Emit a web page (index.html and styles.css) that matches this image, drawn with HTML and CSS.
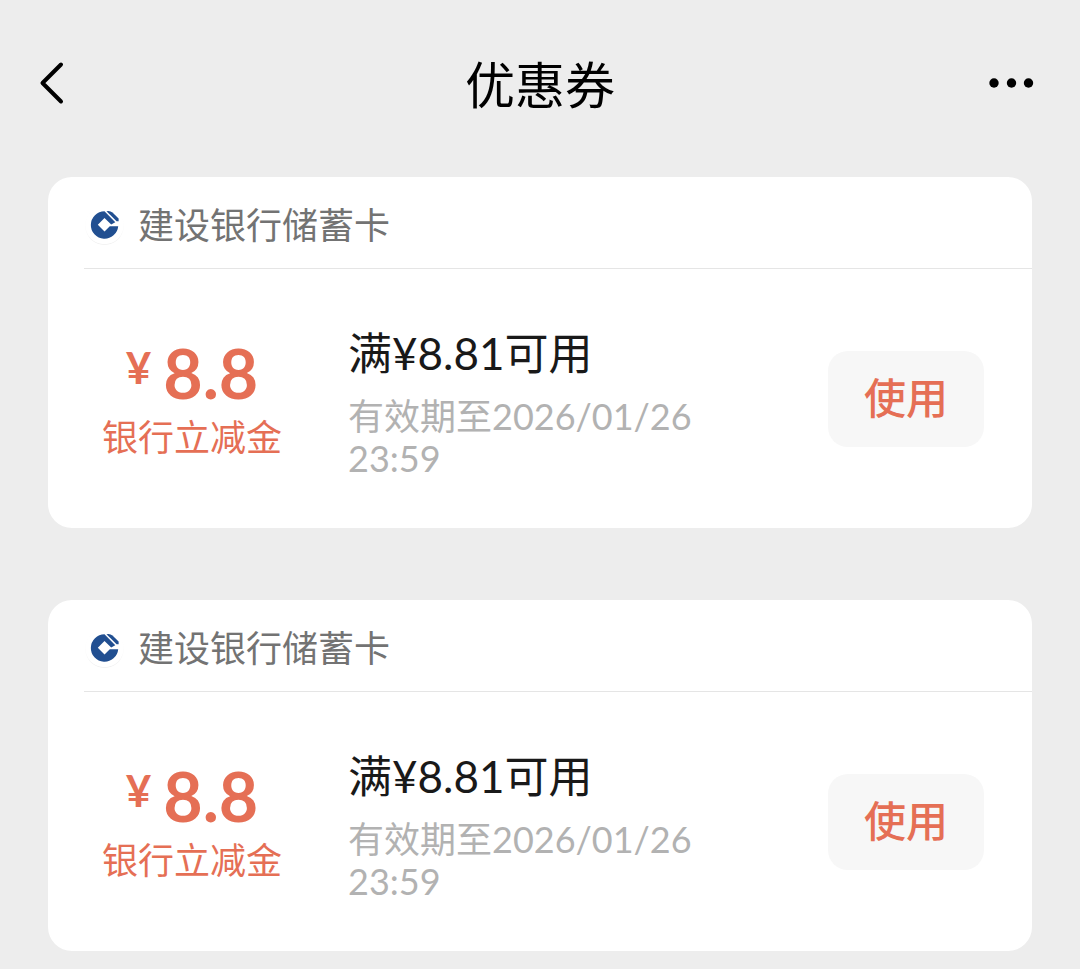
FILE: index.html
```html
<!DOCTYPE html>
<html lang="zh-CN">
<head>
<meta charset="utf-8">
<meta name="viewport" content="width=device-width, initial-scale=1">
<title>优惠券</title>
<link rel="stylesheet" href="styles.css">
</head>
<body>
<svg class="symbols" aria-hidden="true">
  <symbol id="bank-logo" viewBox="0 0 40 40">
    <circle cx="20.500" cy="21" r="19" fill="#f0f0f0"/>
    <circle cx="20.500" cy="20" r="19.300" fill="#fff"/>
    <path d="M20.500 6.300A13.700 13.700 0 1 0 34.200 21.200H25.800L20.500 26.500L13.800 19.800L20.500 13.100L27.200 19.400L31.300 17.200L20.500 6.300Z" fill="#214f91"/>
    <path d="M22.500 6.200Q26 5.400 28.500 7.500L34.600 13.500V16.200L32.600 16.200Z" fill="#214f91"/>
  </symbol>
</svg>
<header class="topbar">
  <button class="icon-button back" type="button" aria-label="返回">
    <svg width="26" height="44" viewBox="0 0 26 44"><path d="M22 3.500L3.500 22L22 40.500" fill="none" stroke="#000" stroke-width="4" stroke-linecap="round" stroke-linejoin="round"/></svg>
  </button>
  <h1 class="title">优惠券</h1>
  <button class="icon-button more" type="button" aria-label="更多">
    <svg width="46" height="12" viewBox="0 0 46 12"><circle cx="6" cy="6" r="4.700"/><circle cx="23.500" cy="6" r="4.700"/><circle cx="40.500" cy="6" r="4.700"/></svg>
  </button>
</header>
<main class="coupons">
  <article class="coupon">
    <header class="bank">
      <svg class="bank-logo"><use href="#bank-logo"/></svg>
      <span>建设银行储蓄卡</span>
    </header>
    <div class="body">
      <div class="value">
        <p class="amount"><span class="currency">¥</span><span>8.8</span></p>
        <p class="kind">银行立减金</p>
      </div>
      <div class="info">
        <h2 class="condition">满¥8.81可用</h2>
        <p class="expiry">有效期至2026/01/26 23:59</p>
      </div>
      <button class="use" type="button">使用</button>
    </div>
  </article>
  <article class="coupon">
    <header class="bank">
      <svg class="bank-logo"><use href="#bank-logo"/></svg>
      <span>建设银行储蓄卡</span>
    </header>
    <div class="body">
      <div class="value">
        <p class="amount"><span class="currency">¥</span><span>8.8</span></p>
        <p class="kind">银行立减金</p>
      </div>
      <div class="info">
        <h2 class="condition">满¥8.81可用</h2>
        <p class="expiry">有效期至2026/01/26 23:59</p>
      </div>
      <button class="use" type="button">使用</button>
    </div>
  </article>
</main>
</body>
</html>
```
FILE: styles.css
```css
* {
  box-sizing: border-box;
}

body {
  margin: 0;
  background: #ededed;
  color: #191919;
  font-family: Lato, "Noto Sans CJK SC", sans-serif;
}

h1, h2, p {
  margin: 0;
  font-weight: 400;
}

button {
  border: 0;
  font: inherit;
  cursor: pointer;
}

.symbols {
  display: none;
}

.topbar {
  display: grid;
  grid-template-columns: 1fr auto 1fr;
  align-items: center;
  height: 165px;
  padding: 0 36px;
}

.icon-button {
  display: flex;
  padding: 0;
  background: none;
}

.back {
  padding-left: 3px;
}

.more {
  justify-self: end;
  padding-right: 10px;
}

.title {
  padding-top: 4px;
  color: #000;
  font-size: 50px;
  line-height: 72px;
}

.coupons {
  display: flex;
  flex-direction: column;
  gap: 72px;
  padding: 12px 48px 18px;
}

.coupon {
  padding-left: 36px;
  border-radius: 24px;
  background: #fff;
}

.bank {
  display: flex;
  align-items: center;
  gap: 14px;
  height: 92px;
  padding-top: 4px;
  border-bottom: 1px solid #e5e5e5;
  color: #737373;
  font-size: 36px;
  line-height: 48px;
}

.bank-logo {
  width: 40px;
  height: 40px;
}

.body {
  display: flex;
  align-items: center;
  min-height: 259px;
  padding-right: 48px;
}

.value {
  width: 216px;
  padding-top: 2px;
  color: #e56f55;
  text-align: center;
}

.amount {
  display: flex;
  justify-content: center;
  gap: 12px;
  font-size: 68px;
  font-weight: 700;
  line-height: 70px;
}

.currency {
  font-size: 44px;
  line-height: 58px;
}

.kind {
  padding-top: 5px;
  font-size: 36px;
  line-height: 48px;
}

.info {
  flex: 1;
  margin-left: 48px;
  padding-top: 4px;
}

.condition {
  font-size: 44px;
  line-height: 60px;
}

.expiry {
  max-width: 360px;
  margin-top: 12px;
  color: #b2b2b2;
  font-size: 36px;
  line-height: 42px;
}

.use {
  min-width: 156px;
  height: 96px;
  padding-bottom: 8px;
  border-radius: 20px;
  background: #f7f7f7;
  color: #e56f55;
  font-size: 42px;
  font-weight: 500;
}
```
